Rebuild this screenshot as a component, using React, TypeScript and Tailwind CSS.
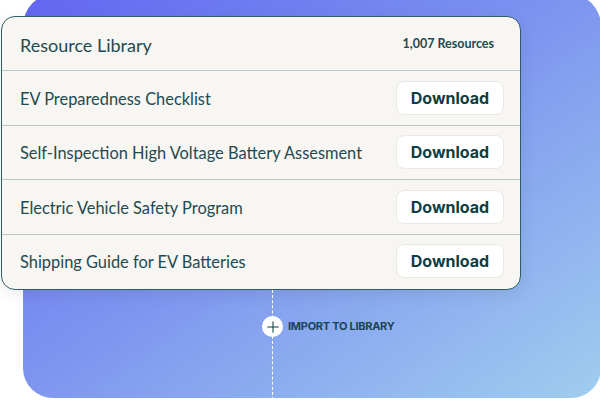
import { Plus } from "lucide-react";

const resources = [
  "EV Preparedness Checklist",
  "Self-Inspection High Voltage Battery Assesment",
  "Electric Vehicle Safety Program",
  "Shipping Guide for EV Batteries",
];

export default function App() {
  return (
    <div
      className="w-[600px] h-[400px] overflow-hidden bg-white"
      style={{ fontFamily: "Lato, 'Open Sans', sans-serif" }}>
      <div className="ml-[23px] mt-[-6px] w-[578px] h-[404px] rounded-t-[32px] rounded-b-[30px] bg-gradient-to-br from-[#6366f1] via-[#7f96ef] to-[#a0cdee] pt-[22px]">
        <div className="ml-[-22px] w-[520px] rounded-[14px] border-[1.5px] border-[#2f5d65] bg-[#f7f6f3] shadow-[0_4px_16px_rgba(0,0,0,0.08)]">
          <div className="flex items-center justify-between h-[54px] pl-[18px] pr-[26px] border-b border-[#b6c8cb]">
            <span className="text-[18px] text-[#1f4a50] pt-[3px]">Resource Library</span>
            <span className="text-[12.5px] font-bold text-[#1f4a50] pt-[2px]">1,007 Resources</span>
          </div>
          {resources.map((r, i) => (
            <div
              key={r}
              className={
                "flex items-center justify-between h-[54.5px] pl-[18px] pr-[16px] " +
                (i < resources.length - 1 ? "border-b border-[#b6c8cb]" : "pb-[1px]")
              }>
              <span className="text-[16.4px] text-[#1f4a50] pt-[3px]">{r}</span>
              <button className="w-[108px] h-[34px] rounded-[8px] bg-white border border-[#ebe8e2] text-[16px] font-bold text-[#0f3d40] font-[Inter]">
                Download
              </button>
            </div>
          ))}
        </div>
        <div className="relative ml-[249px] h-[110px] border-l border-dashed border-white">
          <div className="absolute left-[-11px] top-[26px] flex items-center gap-[5px]">
            <div className="w-[21px] h-[21px] rounded-full bg-white flex items-center justify-center">
              <Plus className="w-[18px] h-[18px] text-[#0f3d40]" strokeWidth={1.4} />
            </div>
            <span className="text-[11px] font-bold text-[#1b4452] tracking-tight font-[Inter]">IMPORT TO LIBRARY</span>
          </div>
        </div>
      </div>
    </div>
  );
}
